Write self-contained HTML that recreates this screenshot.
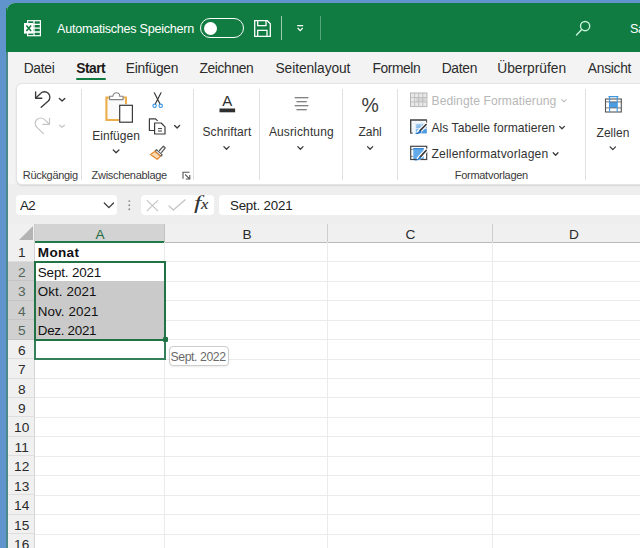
<!DOCTYPE html>
<html lang="de">
<head>
<meta charset="utf-8">
<title>Excel</title>
<style>
*{box-sizing:border-box;margin:0;padding:0}
html,body{width:640px;height:548px;overflow:hidden}
body{background:#5f94cc;font-family:"Liberation Sans",sans-serif;color:#222;position:relative}
.win{position:absolute;left:7px;top:3px;width:700px;height:600px;background:#f3f3f3;border-top-left-radius:8px;overflow:hidden}
.title{position:absolute;left:0;top:0;width:100%;height:49px;background:#107c41}
.t{position:absolute;white-space:nowrap}
.a{position:absolute}
.ribbon{position:absolute;left:9px;top:80px;width:700px;height:101.5px;background:#fff;border:1px solid #e3e3e3;border-radius:6px;box-shadow:0 1px 2px rgba(0,0,0,.10)}
.sep{position:absolute;width:1px;background:#e0e0e0;top:86px;height:90.5px}
.fbox{position:absolute;background:#fff;border-radius:4px;top:191.8px;height:20.6px}
.grid{position:absolute;left:0;top:221px;width:700px;height:400px;background:#fff}
.colh{position:absolute;top:221px;height:18.6px;background:#f0f0f0;border-right:1px solid #cdcdcd;border-bottom:1px solid #b9b9b9}
.rowh{position:absolute;left:0;width:28.4px;height:19.5px;line-height:21.6px;background:#f0f0f0;border-bottom:1px solid #dedede;border-right:1px solid #d4d4d4;font-size:13.7px;color:#2b2b2b;text-align:center;padding-left:2px}
.rowh.sel{background:#d0d0d0;color:#50645a;border-bottom-color:#c4c4c4}
.vl{position:absolute;width:1px;background:#ebebeb;top:239px;height:400px}
.hl{position:absolute;height:1px;background:#ebebeb;left:28px;width:700px}
.selbg{position:absolute;background:#cacaca}
.selbox{position:absolute;border:2px solid #217346}
.fillbox{position:absolute;border:2px solid #34805a;border-top:none}
.handle{position:absolute;width:5px;height:5px;background:#217346;border-radius:1px}
.tip{position:absolute;left:161.5px;top:343px;width:60.5px;height:19.5px;box-shadow:0 1px 2px rgba(0,0,0,.08);border:1px solid #cdcdcd;border-radius:4px;background:#fff}
svg{position:absolute;overflow:visible}
</style>
</head>
<body>
<div class="a" style="left:5.9px;top:8px;width:2px;height:44px;background:#107c41"></div>
<div class="win">
  <div class="title">
    <svg style="left:17px;top:17px" width="17" height="17" viewBox="0 0 17 17">
      <rect x="3.6" y=".7" width="12.8" height="15" fill="none" stroke="#fff" stroke-width="1.2"/>
      <path d="M10 .7v15M3.6 4.4h12.8M3.6 8.2h12.8M3.6 12h12.8" stroke="#fff" stroke-width="1.3" fill="none"/>
      <rect x="0" y="3" width="9.2" height="10.6" fill="#fff"/>
      <path d="M2.4 5.4l4.7 5.7M7.1 5.4l-4.7 5.7" stroke="#107c41" stroke-width="1.5"/>
    </svg>
    <div class="a" style="left:193.3px;top:15px;width:43.5px;height:20px;border:1.3px solid #fff;border-radius:10px"></div>
    <div class="a" style="left:196.5px;top:18.5px;width:13px;height:13px;border-radius:50%;background:#fff"></div>
    <svg style="left:246.5px;top:17px" width="17" height="17" viewBox="0 0 17 17" fill="none" stroke="#fff" stroke-width="1.3">
      <path d="M.7 .7h12.6l3 3v12.6H.7z"/>
      <path d="M3.7 .7v5h8.3v-5"/>
      <path d="M3.7 16.3v-6h9.3v6"/>
    </svg>
    <div class="a" style="left:273.7px;top:13px;width:1px;height:24px;background:rgba(255,255,255,.6)"></div>
    <svg style="left:290px;top:22.3px" width="6.4" height="6.4" viewBox="0 0 8 8" fill="none" stroke="#fff" stroke-width="1.5">
      <path d="M.3 .8h7.4M.8 3.8L4 7l3.2-3.2"/>
    </svg>
    <div class="a" style="left:313px;top:13px;width:1px;height:24px;background:rgba(255,255,255,.3)"></div>
    <svg style="left:-7px;top:-3px" width="660" height="60" viewBox="0 0 660 60" fill="none" stroke="#c6f2d8" stroke-width="1.4" stroke-linecap="round">
      <circle cx="585.1" cy="26.1" r="4.6"/><path d="M581.7 29.6L576.5 35.1"/>
    </svg>
  </div>
  <div class="a" style="left:69px;top:75px;width:30px;height:2.4px;background:#107c41;border-radius:1px"></div>

  <div class="a" style="left:0;top:181px;width:700px;height:40px;background:#eeeeee"></div>
  <div class="ribbon"></div>
  <div class="sep" style="left:74px"></div>
  <div class="sep" style="left:186px"></div>
  <div class="sep" style="left:252px"></div>
  <div class="sep" style="left:335px"></div>
  <div class="sep" style="left:390px"></div>
  <div class="sep" style="left:578px"></div>


  <div class="fbox" style="left:9.3px;width:101.2px"></div>
  <div class="fbox" style="left:133.5px;width:73px"></div>
  <div class="fbox" style="left:212.2px;width:500px"></div>

  <svg style="left:-7px;top:-3px" width="660" height="560" viewBox="0 0 660 560" fill="none">
    <!-- undo -->
    <g stroke="#3b3b3b" stroke-width="1.35" stroke-linecap="round" stroke-linejoin="round">
      <path d="M35.6 91.8V98.2H41.8"/>
      <path d="M35.8 98L40.6 93.4A5.4 5.4 0 0 1 48.3 101L41.2 107.3"/>
      <path d="M59.4 98.4L62.1 101.1L64.8 98.4"/>
    </g>
    <!-- redo -->
    <g stroke="#c4c4c4" stroke-width="1.2" stroke-linecap="round" stroke-linejoin="round">
      <path d="M49.5 118.3V124.3H42.8"/>
      <path d="M49.3 124.1L44.5 119.6A5.4 5.4 0 0 0 36.8 127.2L43.4 133.6"/>
      <path d="M59.4 125.1L62 127.3L64.6 125.1"/>
    </g>
    <!-- clipboard -->
    <rect x="107" y="98.4" width="18.6" height="21" fill="#fafafa"/>
    <path d="M110 97.6H106.4V120H119" stroke="#edae4c" stroke-width="2.1"/>
    <path d="M122.5 97.6H126V104.2" stroke="#edae4c" stroke-width="2"/>
    <path d="M109.6 99.6V96.2H112.9A3.4 3.4 0 0 1 119.7 96.2H123V99.6Z" fill="#fff" stroke="#858585" stroke-width="1.1"/>
    <rect x="119.7" y="105.3" width="12.7" height="16.9" fill="#fff" stroke="#3b3b3b" stroke-width="1.2"/>
    <path d="M113.3 150L116.1 152.7L118.9 150" stroke="#3b3b3b" stroke-width="1.3" stroke-linecap="round" stroke-linejoin="round"/>
    <!-- scissors -->
    <g stroke="#3b3b3b" stroke-width="1.2" stroke-linecap="round">
      <path d="M154.3 92.8L159.8 103.6M161 92.8L155.5 103.6"/>
    </g>
    <circle cx="154.6" cy="105.8" r="1.7" stroke="#3b94e0" stroke-width="1.1"/>
    <circle cx="160.7" cy="105.8" r="1.7" stroke="#3b94e0" stroke-width="1.1"/>
    <!-- copy -->
    <g stroke="#3b3b3b" stroke-width="1.2" stroke-linejoin="round">
      <path d="M154 130.5H149.4V118.8H155.5L157.6 120.9" />
      <path d="M154.6 123H161.2L165 126.8V134H154.6Z" fill="#fff"/>
      <path d="M158 128.6H162M158 131H162" stroke-width="1"/>
      <path d="M174.6 125.5L177.1 128L179.6 125.5" stroke-width="1.3" stroke-linecap="round"/>
    </g>
    <!-- format painter -->
    <g stroke-linejoin="round" stroke-linecap="round">
      <path d="M159.5 150.5L163.4 146.2L165.3 147.9L161.6 152.3" stroke="#555" stroke-width="1.2"/>
      <path d="M156.5 149.6L162.2 154.8L160.8 156.3L155.1 151.1Z" stroke="#555" stroke-width="1.1" fill="#fff"/>
      <path d="M154.8 151.4L150.5 154.6L157.2 159.3L160.4 156.4Z" stroke="#e8892b" stroke-width="1.2" fill="#fbdcb9"/>
    </g>
    <!-- dialog launcher -->
    <g stroke="#555" stroke-width="1.1" stroke-linecap="square">
      <path d="M183 178.3V172.3H189"/>
      <path d="M185.6 174.9L189.6 178.9M189.8 175.5V179H186.3"/>
    </g>
    <!-- font A -->
    <rect x="219.5" y="108.5" width="15.6" height="3.8" fill="#2f2f2f"/>
    <!-- align -->
    <g stroke="#5a5a5a" stroke-width="1.1">
      <path d="M294.7 97.7H308.4M296.5 101.7H306.8M294.7 105.7H308.4M296.5 109.7H306.8"/>
    </g>
    <!-- chevrons under big buttons -->
    <g stroke="#3b3b3b" stroke-width="1.3" stroke-linecap="round" stroke-linejoin="round">
      <path d="M223.9 146.6L226.5 149.2L229.1 146.6"/>
      <path d="M297.8 146.6L300.4 149.2L303 146.6"/>
      <path d="M367.5 146.6L370.1 149.2L372.7 146.6"/>
      <path d="M610.1 146.9L612.8 149.6L615.5 146.9"/>
      <path d="M559.6 126.4L562 128.8L564.4 126.4"/>
      <path d="M553.2 152.8L555.6 155.2L558 152.8"/>
    </g>
    <path d="M561.6 99.6L563.9 101.8L566.2 99.6" stroke="#c2c2c2" stroke-width="1.2" stroke-linecap="round" stroke-linejoin="round"/>
    <!-- cond. format (disabled) -->
    <g>
      <rect x="410.5" y="93" width="16.4" height="13.6" fill="#e9e9e9" stroke="#b4b4b4" stroke-width="1"/>
      <rect x="416" y="97.5" width="10.9" height="4.5" fill="#d6d6d6"/>
      <path d="M410.5 97.5H427M410.5 102H427M414.6 93V106.6M418.7 93V106.6M422.8 93V106.6" stroke="#bcbcbc" stroke-width=".9"/>
    </g>
    <!-- format as table -->
    <defs><linearGradient id="bl" x1="0" y1="0" x2="1" y2="1"><stop offset="0" stop-color="#a9d0f3"/><stop offset="1" stop-color="#3a8fdc"/></linearGradient></defs>
    <g>
      <rect x="410.6" y="119.9" width="16.2" height="13.5" fill="#f4f9fd"/>
      <rect x="415.6" y="123.7" width="11.2" height="9.7" fill="url(#bl)"/>
      <path d="M410.6 123.7H426.8M410.6 128.6H426.8M415.6 119.9V133.4M421.1 119.9V133.4" stroke="#e4eef8" stroke-width=".8"/>
      <path d="M410.7 133.6V120H426.9" stroke="#3f3f3f" stroke-width="1.3"/>
      <path d="M410.7 133.1H412.6M426.6 120V123" stroke="#555" stroke-width="1.1"/>
      <path d="M418.6 132.2L426.2 124.4" stroke="#fff" stroke-width="3.8" stroke-linecap="round"/>
      <path d="M420.3 130.4L426.1 124.5" stroke="#3a3a3a" stroke-width="1.7" stroke-linecap="round"/>
      <path d="M413.6 133.9Q417.6 133.6 419.6 129.9L421.6 131.7Q419.6 134.6 413.6 133.9Z" fill="#1f6fc4"/>
    </g>
    <!-- cell styles -->
    <g>
      <rect x="410.6" y="146.2" width="16.2" height="13.3" fill="#fff"/>
      <rect x="413.3" y="148" width="10.4" height="11.4" fill="#62aaea"/>
      <path d="M413.3 148.7H423.7" stroke="#2f7fd0" stroke-width="1.1"/>
      <path d="M410.6 149.4H413.3M410.6 156.4H413.3" stroke="#777" stroke-width=".8"/>
      <rect x="410.7" y="146.3" width="16" height="13.2" stroke="#444" stroke-width="1.2"/>
      <path d="M418.6 158.6L426.2 150.4" stroke="#fff" stroke-width="3.8" stroke-linecap="round"/>
      <path d="M420.3 156.8L426.1 150.5" stroke="#3a3a3a" stroke-width="1.7" stroke-linecap="round"/>
      <path d="M413.8 160.4Q417.6 160.2 419.6 156.3L421.6 158.1Q419.6 161.2 413.8 160.4Z" fill="#2a7bd0"/>
    </g>
    <!-- cells -->
    <g>
      <rect x="609.6" y="101.9" width="7.6" height="6" fill="#4a9de2"/>
      <rect x="605.5" y="99" width="15.8" height="13" stroke="#555" stroke-width="1.1"/>
      <path d="M605.5 101.9H621.3M605.5 107.9H621.3" stroke="#666" stroke-width=".9"/>
      <path d="M609.6 96.5V112M617.2 96.5V112" stroke="#3f97e0" stroke-width="1.1"/>
      <path d="M608.4 96.6H618.4" stroke="#3f97e0" stroke-width="1.2"/>
    </g>
    <!-- name box chevron -->
    <path d="M104.3 203L108.9 207.6L113.5 203" stroke="#3b3b3b" stroke-width="1.3" stroke-linecap="round" stroke-linejoin="round"/>
    <g fill="#8a8a8a"><circle cx="129.3" cy="201.1" r=".95"/><circle cx="129.3" cy="205.2" r=".95"/><circle cx="129.3" cy="209.3" r=".95"/></g>
    <!-- cancel / enter -->
    <g stroke="#c3c3c3" stroke-width="1.2" stroke-linecap="round" stroke-linejoin="round">
      <path d="M147.2 200.6L157.6 210.6M157.6 200.6L147.2 210.6"/>
      <path d="M169 206L173.4 210L185.2 199.8"/>
    </g>
  </svg>
  <div class="t" style="left:215.3px;top:88.2px;font-size:15px;line-height:20px;color:#2f2f2f">A</div>
  <div class="t" style="left:354.5px;top:89.5px;font-size:19.5px;line-height:24px;color:#3b3b3b;letter-spacing:0">%</div>
  <div class="t" id="fxf" style="left:187.2px;top:188.6px;font-family:'Liberation Serif',serif;font-style:italic;font-size:18.6px;line-height:22px;color:#333;transform:scaleX(1.42);transform-origin:0 0">f</div>
  <div class="t" id="fxx" style="left:194.4px;top:190.4px;font-family:'Liberation Serif',serif;font-style:italic;font-size:15px;line-height:22px;color:#2e2e2e;-webkit-text-stroke:0.15px #2e2e2e;transform:scaleX(1.1);transform-origin:0 0">x</div>

  <div class="grid"></div>
  <div class="colh" style="left:0;width:28px"></div>
  <div class="colh" style="left:28px;width:130px;background:#d3d3d3;border-bottom:2px solid #1f7a47;border-right-color:#c3c3c3"></div>
  <div class="colh" style="left:158px;width:163px"></div>
  <div class="colh" style="left:321px;width:164.5px"></div>
  <div class="colh" style="left:485.5px;width:164px"></div>
  <svg style="left:12px;top:223px" width="14" height="14" viewBox="0 0 14 14"><path d="M14 0v14H0z" fill="#b4b4b4"/></svg>
  <div class="vl" style="left:157px"></div>
  <div class="vl" style="left:320px"></div>
  <div class="vl" style="left:484.5px"></div>
<div class="rowh" style="top:239.3px">1</div>
<div class="rowh sel" style="top:258.8px">2</div>
<div class="rowh sel" style="top:278.2px">3</div>
<div class="rowh sel" style="top:297.7px">4</div>
<div class="rowh sel" style="top:317.1px">5</div>
<div class="rowh" style="top:336.6px">6</div>
<div class="rowh" style="top:356.0px">7</div>
<div class="rowh" style="top:375.5px">8</div>
<div class="rowh" style="top:394.9px">9</div>
<div class="rowh" style="top:414.4px">10</div>
<div class="rowh" style="top:433.9px">11</div>
<div class="rowh" style="top:453.3px">12</div>
<div class="rowh" style="top:472.8px">13</div>
<div class="rowh" style="top:492.2px">14</div>
<div class="rowh" style="top:511.6px">15</div>
<div class="rowh" style="top:531.1px">16</div>
<div class="hl" style="top:258.3px"></div>
<div class="hl" style="top:277.8px"></div>
<div class="hl" style="top:297.2px"></div>
<div class="hl" style="top:316.6px"></div>
<div class="hl" style="top:336.1px"></div>
<div class="hl" style="top:355.5px"></div>
<div class="hl" style="top:375.0px"></div>
<div class="hl" style="top:394.4px"></div>
<div class="hl" style="top:413.9px"></div>
<div class="hl" style="top:433.4px"></div>
<div class="hl" style="top:452.8px"></div>
<div class="hl" style="top:472.2px"></div>
<div class="hl" style="top:491.7px"></div>
<div class="hl" style="top:511.1px"></div>
<div class="hl" style="top:530.6px"></div>
<div class="hl" style="top:550.0px"></div>
  <div class="selbg" style="left:28px;top:278.25px;width:130px;height:58.35px"></div>
  <div class="fillbox" style="left:27px;top:336.60px;width:132px;height:20.05px"></div>
  <div class="selbox" style="left:27px;top:257.80px;width:132px;height:80.50px"></div>
  <div class="handle" style="left:155.6px;top:334.20px"></div>
  <div class="tip"></div>
<div class="t" style="left:50.0px;top:17.5px;height:16px;line-height:16px;font-size:12.6px;color:#fff;letter-spacing:-0.25px">Automatisches Speichern</div>
<div class="t" style="left:623.0px;top:17.5px;height:16px;line-height:16px;font-size:12.6px;color:#fff;letter-spacing:-0.30px">Sa</div>
<div class="t" style="left:16.7px;top:57.0px;height:18px;line-height:18px;font-size:13.8px;color:#2b2b2b;letter-spacing:-0.30px">Datei</div>
<div class="t" style="left:69.3px;top:57.0px;height:18px;line-height:18px;font-size:13.8px;color:#1a1a1a;letter-spacing:-0.53px;font-weight:bold">Start</div>
<div class="t" style="left:118.8px;top:57.0px;height:18px;line-height:18px;font-size:13.8px;color:#2b2b2b;letter-spacing:-0.27px">Einfügen</div>
<div class="t" style="left:192.4px;top:57.0px;height:18px;line-height:18px;font-size:13.8px;color:#2b2b2b;letter-spacing:-0.35px">Zeichnen</div>
<div class="t" style="left:268.5px;top:57.0px;height:18px;line-height:18px;font-size:13.8px;color:#2b2b2b;letter-spacing:-0.09px">Seitenlayout</div>
<div class="t" style="left:365.6px;top:57.0px;height:18px;line-height:18px;font-size:13.8px;color:#2b2b2b;letter-spacing:-0.43px">Formeln</div>
<div class="t" style="left:434.7px;top:57.0px;height:18px;line-height:18px;font-size:13.8px;color:#2b2b2b;letter-spacing:-0.28px">Daten</div>
<div class="t" style="left:490.3px;top:57.0px;height:18px;line-height:18px;font-size:13.8px;color:#2b2b2b;letter-spacing:-0.03px">Überprüfen</div>
<div class="t" style="left:580.8px;top:57.0px;height:18px;line-height:18px;font-size:13.8px;color:#2b2b2b;letter-spacing:-0.27px">Ansicht</div>
<div class="t" style="left:15.8px;top:164.8px;height:14px;line-height:14px;font-size:11.0px;color:#3a3a3a;letter-spacing:-0.31px">Rückgängig</div>
<div class="t" style="left:84.6px;top:164.8px;height:14px;line-height:14px;font-size:11.0px;color:#3a3a3a;letter-spacing:-0.30px">Zwischenablage</div>
<div class="t" style="left:447.7px;top:164.8px;height:14px;line-height:14px;font-size:11.0px;color:#3a3a3a;letter-spacing:-0.27px">Formatvorlagen</div>
<div class="t" style="left:85.2px;top:124.6px;height:16px;line-height:16px;font-size:12.0px;color:#333;letter-spacing:0.06px">Einfügen</div>
<div class="t" style="left:195.5px;top:121.0px;height:16px;line-height:16px;font-size:12.0px;color:#333;letter-spacing:0.08px">Schriftart</div>
<div class="t" style="left:261.9px;top:121.0px;height:16px;line-height:16px;font-size:12.0px;color:#333;letter-spacing:0.14px">Ausrichtung</div>
<div class="t" style="left:351.5px;top:121.0px;height:16px;line-height:16px;font-size:12.0px;color:#333;letter-spacing:-0.05px">Zahl</div>
<div class="t" style="left:589.5px;top:121.8px;height:16px;line-height:16px;font-size:12.0px;color:#333;letter-spacing:0.06px">Zellen</div>
<div class="t" style="left:424.5px;top:90.3px;height:16px;line-height:16px;font-size:12.1px;color:#b7b7b7;letter-spacing:0.09px">Bedingte Formatierung</div>
<div class="t" style="left:424.5px;top:116.9px;height:16px;line-height:16px;font-size:12.1px;color:#333;letter-spacing:0.03px">Als Tabelle formatieren</div>
<div class="t" style="left:424.5px;top:143.4px;height:16px;line-height:16px;font-size:12.1px;color:#333;letter-spacing:0.16px">Zellenformatvorlagen</div>
<div class="t" style="left:13.0px;top:193.5px;height:17px;line-height:17px;font-size:13.3px;color:#222;letter-spacing:-0.67px">A2</div>
<div class="t" style="left:223.0px;top:193.5px;height:17px;line-height:17px;font-size:13.3px;color:#222;letter-spacing:-0.20px">Sept. 2021</div>
<div class="t" style="left:88.5px;top:222.7px;height:18px;line-height:18px;font-size:13.7px;color:#1e6b41;letter-spacing:0.00px">A</div>
<div class="t" style="left:235.5px;top:222.7px;height:18px;line-height:18px;font-size:13.7px;color:#2b2b2b;letter-spacing:0.00px">B</div>
<div class="t" style="left:398.5px;top:222.7px;height:18px;line-height:18px;font-size:13.7px;color:#2b2b2b;letter-spacing:0.00px">C</div>
<div class="t" style="left:562.0px;top:222.7px;height:18px;line-height:18px;font-size:13.7px;color:#2b2b2b;letter-spacing:0.00px">D</div>
<div class="t" style="left:30.8px;top:241.2px;height:18px;line-height:18px;font-size:13.5px;color:#111;letter-spacing:0.36px;font-weight:bold">Monat</div>
<div class="t" style="left:30.8px;top:260.6px;height:17px;line-height:17px;font-size:13.4px;color:#111;letter-spacing:-0.15px">Sept. 2021</div>
<div class="t" style="left:30.8px;top:280.1px;height:17px;line-height:17px;font-size:13.4px;color:#111;letter-spacing:0.08px">Okt. 2021</div>
<div class="t" style="left:30.8px;top:299.5px;height:17px;line-height:17px;font-size:13.4px;color:#111;letter-spacing:0.08px">Nov. 2021</div>
<div class="t" style="left:30.8px;top:319.0px;height:17px;line-height:17px;font-size:13.4px;color:#111;letter-spacing:-0.29px">Dez. 2021</div>
<div class="t" style="left:163.5px;top:345.5px;height:16px;line-height:16px;font-size:12.3px;color:#6a6a6a;letter-spacing:-0.44px">Sept. 2022</div>
</div>
<div class="a" style="left:5.7px;top:52px;width:2.2px;height:500px;background:#4a888a"></div>
</body>
</html>
